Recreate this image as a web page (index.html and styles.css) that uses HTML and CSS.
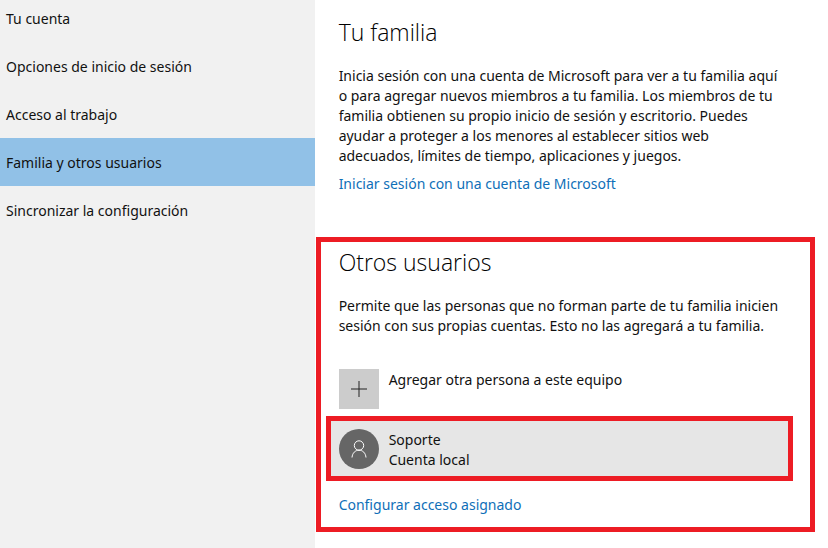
FILE: index.html
```html
<!DOCTYPE html>
<html lang="es">
<head>
<meta charset="utf-8">
<title>Familia y otros usuarios</title>
<link rel="stylesheet" href="styles.css">
</head>
<body>
<nav class="sidebar">
  <a href="#">Tu cuenta</a>
  <a href="#">Opciones de inicio de sesión</a>
  <a href="#">Acceso al trabajo</a>
  <a href="#" class="active" aria-current="page">Familia y otros usuarios</a>
  <a href="#">Sincronizar la configuración</a>
</nav>
<main class="content">
  <section class="family">
    <h1>Tu familia</h1>
    <p>Inicia sesión con una cuenta de Microsoft para ver a tu familia aquí<br>o para agregar nuevos miembros a tu familia. Los miembros de tu<br>familia obtienen su propio inicio de sesión y escritorio. Puedes<br>ayudar a proteger a los menores al establecer sitios web<br>adecuados, límites de tiempo, aplicaciones y juegos.</p>
    <a class="link" href="#">Iniciar sesión con una cuenta de Microsoft</a>
  </section>
  <section class="others">
    <h1>Otros usuarios</h1>
    <p>Permite que las personas que no forman parte de tu familia inicien<br>sesión con sus propias cuentas. Esto no las agregará a tu familia.</p>
    <button class="row add" type="button">
      <span class="plus"><svg viewBox="0 0 40 40"><path d="M20 12v16M12 20h16"/></svg></span>
      <span class="label">Agregar otra persona a este equipo</span>
    </button>
    <button class="row user" type="button">
      <span class="avatar"><svg viewBox="0 0 40 40"><circle cx="20" cy="16.500" r="4.700"/><path d="M13 28.500c.4-4.500 3.200-7.300 7-7.300s6.600 2.800 7 7.300"/></svg></span>
      <span class="label">Soporte<br>Cuenta local</span>
    </button>
    <a class="link" href="#">Configurar acceso asignado</a>
  </section>
</main>
</body>
</html>
```
FILE: styles.css
```css
* { box-sizing: border-box; }
body {
  margin: 0;
  min-height: 100vh;
  display: grid;
  grid-template-columns: 38% 1fr;
  background: #fff;
  color: #111;
  font: 14px/20px "Noto Sans", "Open Sans", sans-serif;
}
.sidebar {
  background: #f1f1f1;
  display: flex;
  flex-direction: column;
}
.sidebar a {
  padding: 15px 6px 13px;
  color: inherit;
  text-decoration: none;
}
.sidebar a:first-child { padding-top: 9px; }
.sidebar .active { background: #91c1e7; }
h1 {
  margin: 0;
  color: #000;
  font-family: "Open Sans", sans-serif;
  font-size: 23px;
  line-height: 32px;
  font-weight: 300;
}
p { margin: 0; white-space: nowrap; }
.link { color: #0f6fb8; text-decoration: none; }
.content { padding: 16px 13px 16px 1px; }
.family { padding: 0 23px 43px; }
.family p { margin: 18px 0 8px; }
.others {
  border: 5px solid #ed1c24;
  padding: 4px 18px 12px;
}
.others p { margin: 18px 0 33px; }
.row {
  display: flex;
  gap: 10px;
  padding: 0;
  border: 0;
  background: none;
  color: inherit;
  font: inherit;
  text-align: left;
}
.row svg { display: block; width: 40px; height: 40px; fill: none; stroke: #222; }
.label { padding-top: 1px; }
.plus { background: #ccc; }
.user {
  width: calc(100% + 14px);
  margin: 7px 0 14px -13px;
  padding: 8px 8px 6px;
  border: 5px solid #ed1c24;
  background: #e6e6e6;
}
.avatar { height: 40px; border-radius: 50%; background: #666; }
.row .avatar svg { stroke: #fff; }
```
